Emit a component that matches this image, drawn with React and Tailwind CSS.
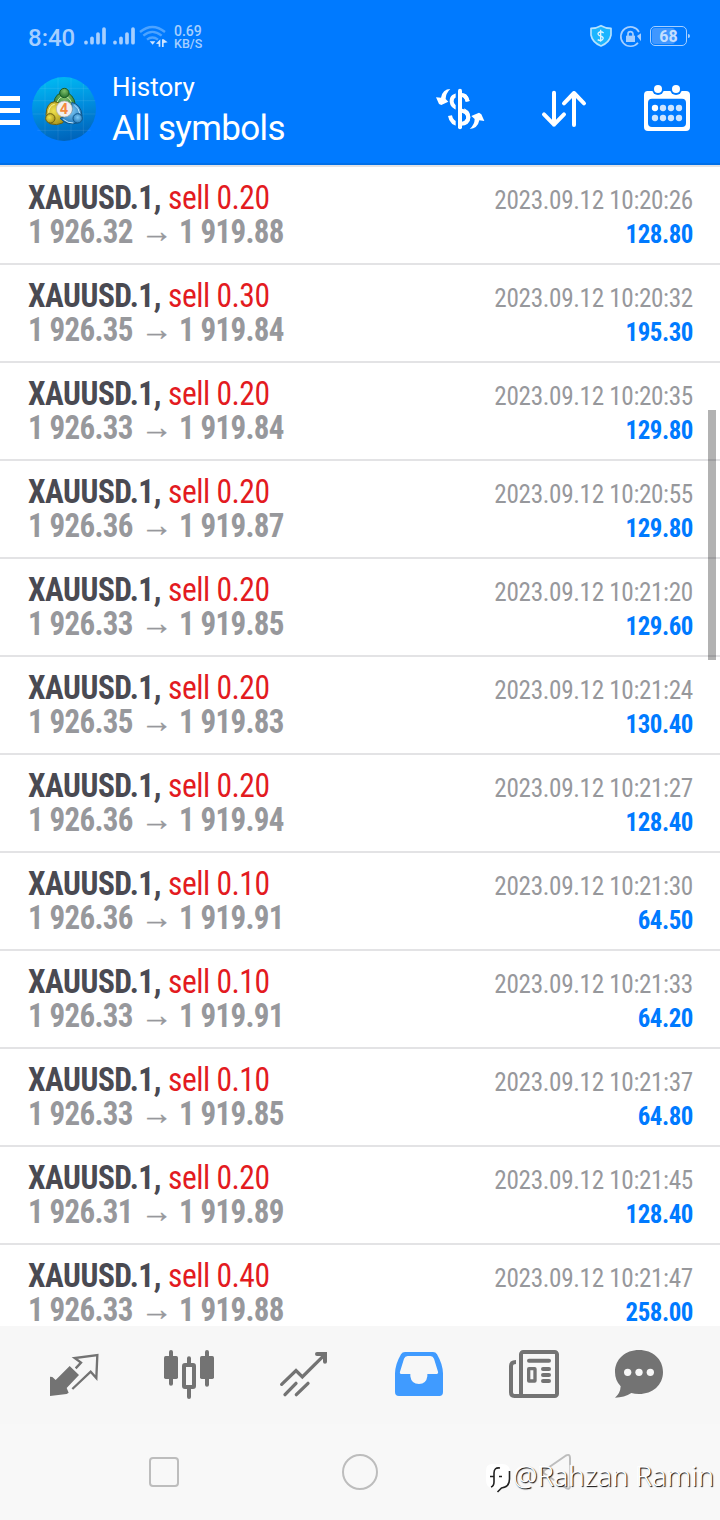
import React from 'react';

const deals = [
  { volume: '0.20', open: '1 926.32', close: '1 919.88', time: '2023.09.12 10:20:26', profit: '128.80' },
  { volume: '0.30', open: '1 926.35', close: '1 919.84', time: '2023.09.12 10:20:32', profit: '195.30' },
  { volume: '0.20', open: '1 926.33', close: '1 919.84', time: '2023.09.12 10:20:35', profit: '129.80' },
  { volume: '0.20', open: '1 926.36', close: '1 919.87', time: '2023.09.12 10:20:55', profit: '129.80' },
  { volume: '0.20', open: '1 926.33', close: '1 919.85', time: '2023.09.12 10:21:20', profit: '129.60' },
  { volume: '0.20', open: '1 926.35', close: '1 919.83', time: '2023.09.12 10:21:24', profit: '130.40' },
  { volume: '0.20', open: '1 926.36', close: '1 919.94', time: '2023.09.12 10:21:27', profit: '128.40' },
  { volume: '0.10', open: '1 926.36', close: '1 919.91', time: '2023.09.12 10:21:30', profit: '64.50' },
  { volume: '0.10', open: '1 926.33', close: '1 919.91', time: '2023.09.12 10:21:33', profit: '64.20' },
  { volume: '0.10', open: '1 926.33', close: '1 919.85', time: '2023.09.12 10:21:37', profit: '64.80' },
  { volume: '0.20', open: '1 926.31', close: '1 919.89', time: '2023.09.12 10:21:45', profit: '128.40' },
  { volume: '0.40', open: '1 926.33', close: '1 919.88', time: '2023.09.12 10:21:47', profit: '258.00' }
];

const SignalIcon = () => (
  <svg viewBox="246 78 168 66" className="w-14 h-[22px] shrink-0" stroke="#a6cfff" strokeWidth="11" strokeLinecap="round">
    <path d="M258 130v1M276 118v13M294 105v26M312 90v41M345 130v1M363 118v13M381 105v26M399 90v41" />
  </svg>
);

const WifiIcon = () => (
  <svg viewBox="420 72 96 72" className="w-8 h-6 shrink-0" fill="none">
    <path d="M426 96Q463 66 501 96" stroke="#4da3ff" strokeWidth="7" />
    <path d="M436 107Q463 84 491 107" stroke="#4da3ff" strokeWidth="7" />
    <path d="M447 119Q463 106 480 119" stroke="#4da3ff" strokeWidth="7" />
    <path d="M455 124h17l-8 10zM474 131l13-13v22h-5v-8zM492 118h5l12 9-12 2v12h-5z" fill="#cfe5ff" />
  </svg>
);

const ShieldIcon = () => (
  <svg viewBox="507 42 72 72" className="w-6 h-6 shrink-0">
    <path d="M543 47q14 8 30 8v20q-4 22-30 33q-26-11-30-33V55q16 0 30-8z" fill="#1cb5ff" stroke="#b5e2ff" strokeWidth="5" strokeLinejoin="round" />
    <path d="M551 69q-8-6-14-2t0 9l8 3q8 5 2 10t-14 0M542 59v36" fill="none" stroke="#dff3ff" strokeWidth="4" />
  </svg>
);

const LockIcon = () => (
  <svg viewBox="597 42 72 72" className="w-6 h-6 shrink-0" fill="none">
    <path d="M657 66A29 29 0 1 0 654 98" stroke="#a6cfff" strokeWidth="5" />
    <path d="M651 78l12-8v24z" fill="#a6cfff" />
    <path d="M618 77h27v19h-27z" fill="#a6cfff" />
    <path d="M624 78v-6q0-7 7-7t8 7v6" stroke="#a6cfff" strokeWidth="5" />
  </svg>
);

const BatteryIcon = () => (
  <div className="ml-px flex items-center">
    <div className="w-[37px] h-5 rounded-[5px] border border-[#a6cfff] p-px">
      <div className="w-[23px] h-4 rounded-[3px] bg-[#4097ff]">
        <div className="w-[33px] pt-px text-center text-[16px]/4 font-bold text-[#c4dfff]">68</div>
      </div>
    </div>
    <div className="ml-px w-[2px] h-1 rounded-r bg-[#a6cfff]"></div>
  </div>
);

const AppLogo = () => (
  <svg viewBox="96 231 192 192" className="w-16 h-16 shrink-0">
    <defs>
      <linearGradient id="sky" x1="0.4" y1="0" x2="0.6" y2="1">
        <stop offset="0" stopColor="#00b9f2" />
        <stop offset="0.5" stopColor="#008bdc" />
        <stop offset="1" stopColor="#0062b8" />
      </linearGradient>
      <radialGradient id="green" cx="0.5" cy="0.3" r="0.7">
        <stop offset="0" stopColor="#7fc06a" />
        <stop offset="1" stopColor="#23702c" />
      </radialGradient>
      <radialGradient id="yellow" cx="0.4" cy="0.4" r="0.7">
        <stop offset="0" stopColor="#efe04c" />
        <stop offset="1" stopColor="#a18d18" />
      </radialGradient>
      <radialGradient id="blue" cx="0.5" cy="0.4" r="0.7">
        <stop offset="0" stopColor="#7cc8f5" />
        <stop offset="1" stopColor="#156bb0" />
      </radialGradient>
    </defs>
    <circle cx="192" cy="327" r="96" fill="url(#sky)" />
    <path d="M135 250v154M174 233v188M213 234v187M250 252v150M118 265h148M98 302h188M98 342h188M112 391h160" stroke="#fff" strokeOpacity="0.13" strokeWidth="2" />
    <path d="M162 326q-4-37 19-47h24q24 15 21 51l-18-7q-15-18-31 1z" fill="url(#green)" stroke="#1d5f28" strokeWidth="3" />
    <path d="M170 318q1-26 22-30q21 3 25 30" fill="none" stroke="#c9e8a8" strokeWidth="3" />
    <path d="M164 305q-25 2-26 39l11 27q21 7 39-2l8-16q-22-6-18-24l7-14q-11-9-21-10z" fill="url(#yellow)" stroke="#6b6013" strokeWidth="3" />
    <path d="M146 338q1-22 18-25" fill="none" stroke="#fff6a0" strokeWidth="3" />
    <path d="M215 307q28 6 31 39l-9 21q-34 13-57-12l13-5q22-4 23-20z" fill="url(#blue)" stroke="#0f5589" strokeWidth="3" />
    <path d="M223 315q14 8 16 25M190 358q14 12 30 11" fill="none" stroke="#c2e8ff" strokeWidth="3" />
    <circle cx="193" cy="279" r="14" fill="url(#green)" stroke="#1a5a26" strokeWidth="3" />
    <circle cx="151" cy="355" r="14" fill="url(#yellow)" stroke="#6b6013" strokeWidth="3" />
    <circle cx="233" cy="355" r="14" fill="url(#blue)" stroke="#0f5589" strokeWidth="3" />
    <circle cx="193" cy="327" r="24" fill="#f1efee" stroke="#aaa" strokeWidth="2" />
    <text x="192" y="342" textAnchor="middle" fontSize="44" fontWeight="700" fill="#f58a3c">4</text>
  </svg>
);

const CurrencyIcon = () => (
  <svg viewBox="42 225 156 144" className="w-[52px] h-12" fill="none">
    <path d="M143 274q-4-20-23-20q-26 1-25 21q1 16 24 22q26 6 26 24q-1 20-25 21q-26 0-30-25" stroke="#fff" strokeWidth="12" />
    <path d="M120 236v122" stroke="#007aff" strokeWidth="26" />
    <path d="M120 301q25 4 25 22q-1 18-25 19M120 254q19 0 23 20" stroke="#fff" strokeWidth="12" />
    <path d="M120 242v110" stroke="#fff" strokeWidth="12" strokeLinecap="round" />
    <path d="M91 237q-23 0-28 26l-15-1l9 20l7 3l21-10l-8-8q0-17 14-30z" fill="#fff" />
    <path d="M149 357q24-1 29-26l15 2l-9-20l-7-5l-23 10l10 9q0 17-15 30z" fill="#fff" />
  </svg>
);

const SortIcon = () => (
  <svg viewBox="360 231 144 132" className="w-12 h-11" fill="none" stroke="#fff" strokeWidth="12" strokeLinecap="round" strokeLinejoin="round">
    <path d="M402 248v96M372 313l30 31l30-31M462 345v-96M432 280l30-31l30 31" />
  </svg>
);

const CalendarIcon = () => (
  <svg viewBox="666 219 150 150" className="mb-[2px] w-[50px] h-[50px]">
    <path d="M683 243h115q12 0 12 12v96q0 12-12 12H684q-12 0-12-12v-96q0-12 11-12z" fill="#fff" />
    <path d="M696 266h90q12 0 12 12v61q0 12-12 12h-90q-12 0-12-12v-61q0-12 12-12z" fill="#007aff" />
    <circle cx="714" cy="237" r="18" fill="#007aff" />
    <circle cx="768" cy="237" r="18" fill="#007aff" />
    <circle cx="714" cy="237" r="12" fill="#fff" />
    <circle cx="768" cy="237" r="12" fill="#fff" />
    <circle cx="705" cy="294" r="9.5" fill="#fff" />
    <g fill="#cce4ff">
      <circle cx="729" cy="294" r="9.5" />
      <circle cx="753" cy="294" r="9.5" />
      <circle cx="777" cy="294" r="9.5" />
      <circle cx="705" cy="324" r="9.5" />
      <circle cx="729" cy="324" r="9.5" />
      <circle cx="753" cy="324" r="9.5" />
      <circle cx="777" cy="324" r="9.5" />
    </g>
  </svg>
);

const QuotesIcon = () => (
  <svg viewBox="144 144 156 156" className="w-[52px] h-[52px]" fill="none">
    <path d="M209 198l28 27l-37 39l6 14l-6 4l-50 6v-58l7 1l10 9z" fill="#737373" />
    <path d="M227 205l16-17l-19-14l68-9l-3 69l-17-19l-55 52" stroke="#737373" strokeWidth="7" />
  </svg>
);

const ChartIcon = () => (
  <svg viewBox="486 144 162 156" className="w-[54px] h-[52px]" fill="none" stroke="#737373">
    <path d="M513 156v95M621 156v98M567 175v18M567 264v27" strokeWidth="12" strokeLinecap="round" />
    <rect x="492" y="168" width="42" height="69" rx="5" fill="#737373" stroke="none" />
    <rect x="600" y="168" width="42" height="69" rx="5" fill="#737373" stroke="none" />
    <rect x="552" y="195" width="30" height="66" rx="3" strokeWidth="12" />
  </svg>
);

const TradeIcon = () => (
  <svg viewBox="834 144 156 156" className="w-[52px] h-[52px]" fill="none" stroke="#737373" strokeWidth="10" strokeLinecap="round">
    <path d="M845 253l43-41l19 19l68-68M855 284l33-34M889 284l35-34" />
    <path d="M951 162h24v23" strokeWidth="12" />
  </svg>
);

const HistoryIcon = () => (
  <svg viewBox="96 144 162 156" className="w-[54px] h-[52px]">
    <path fillRule="evenodd" d="M135 156h84q8 0 12 7q17 29 18 57v56q0 12-11 12H117q-12 0-12-12v-56q1-28 18-57q4-7 12-7zM143 168q-8 0-11 8l-12 39q-2 7 6 7h25v7q3 23 26 23q22 0 25-23v-7h25q9 0 7-7l-12-39q-3-8-11-8z" fill="#409bff" />
  </svg>
);

const NewsIcon = () => (
  <svg viewBox="444 144 162 156" className="w-[54px] h-[52px]" fill="none" stroke="#737373" strokeWidth="12">
    <rect x="483" y="156" width="108" height="132" rx="7" />
    <path d="M468 186q-15 0-15 12v79q0 11 10 11h25" />
    <path d="M507 182h60M549 207h18M549 225h18M549 243h18" strokeLinecap="round" />
    <rect x="506" y="206" width="19" height="37" rx="1" strokeWidth="10" />
  </svg>
);

const ChatIcon = () => (
  <svg viewBox="759 144 156 156" className="w-[52px] h-[52px]">
    <path d="M837 150c41 0 72 27 72 66s-31 66-72 66q-13 0-23-3q-21 14-49 14q16-13 17-34q-17-18-17-43c0-39 31-66 72-66z" fill="#737373" />
    <circle cx="803" cy="217" r="11" fill="#f7f7f7" />
    <circle cx="837" cy="217" r="11" fill="#f7f7f7" />
    <circle cx="871" cy="217" r="11" fill="#f7f7f7" />
  </svg>
);

const DealRow = ({ deal }) => (
  <div className="flex h-[98px] shrink-0 justify-between border-b-2 border-[#e3e3e5] pr-[27px] pl-7 font-['Roboto_Condensed','Roboto',sans-serif] font-stretch-condensed whitespace-pre">
    <div className="pt-[14px] text-[32.5px]/[34px] font-bold">
      <div className="flex">
        <div className="w-[139.5px] origin-left scale-x-[0.965] tracking-[-0.5px] text-[#4a4a52]">XAUUSD.1,</div>
        <div className="origin-left scale-x-[0.97] font-normal tracking-[-0.5px] text-[#e31b1f]">sell {deal.volume}</div>
      </div>
      <div className="flex text-[#97989c]">
        <div className="w-[106px] origin-left scale-x-[0.953] tracking-[-0.7px]">{deal.open}</div>
        <div className="w-[45px] text-center font-['Noto_Sans',sans-serif] text-[32px]/[29px] font-normal [-webkit-text-stroke:0.4px_#97989c]">→</div>
        <div className="origin-left scale-x-[0.953] tracking-[-0.7px]">{deal.close}</div>
      </div>
    </div>
    <div className="pt-4 text-right text-[26px]/[34px]">
      <div className="origin-right scale-x-[0.969] tracking-[-0.35px] text-[#97989c]">{deal.time}</div>
      <div className="origin-right scale-x-[0.957] font-bold tracking-[-0.5px] text-[#007aff]">{deal.profit}</div>
    </div>
  </div>
);

const App = () => {
  return (
    <div className="relative flex h-[1520px] w-[720px] flex-col overflow-hidden bg-white font-['Roboto',sans-serif]">
      <header className="h-[167px] shrink-0 border-b-2 border-[#e3e3e5] bg-[#007aff]">
        <div className="flex h-[165px] flex-col border-b-2 border-[#006fe8]">
          {/* Status bar */}
          <div className="flex h-[72px] items-center justify-between pl-7 pr-[30px]">
            <div className="flex items-center text-[#a6cfff]">
              <span className="w-[54px] pt-[3px] text-2xl font-medium">8:40</span>
              <SignalIcon />
              <WifiIcon />
              <div className="ml-1 pt-[3px] font-medium">
                <div className="text-sm/3">0.69</div>
                <div className="text-[12.5px]/[13px]">KB/S</div>
              </div>
            </div>
            <div className="flex items-center gap-[6px]">
              <ShieldIcon />
              <LockIcon />
              <BatteryIcon />
            </div>
          </div>

          {/* Toolbar */}
          <div className="flex h-[74px] items-center pr-7 text-white">
            <div className="flex w-5 flex-col gap-[7px] pt-[3px]">
              <div className="h-[5px] bg-white"></div>
              <div className="h-[5px] bg-white"></div>
              <div className="h-[5px] bg-white"></div>
            </div>
            <div className="ml-3">
              <AppLogo />
            </div>
            <div className="ml-4 flex-1 pt-[7px]">
              <div className="text-[26px]/[32px]">History</div>
              <div className="text-[35px]/[51px] tracking-[-0.65px]">All symbols</div>
            </div>
            <div className="flex items-center gap-[54px]">
              <CurrencyIcon />
              <SortIcon />
              <CalendarIcon />
            </div>
          </div>
        </div>
      </header>

      <main className="flex min-h-0 flex-1 flex-col overflow-hidden">
        {deals.map((deal) => (
          <DealRow key={deal.time} deal={deal} />
        ))}
      </main>
      <div className="absolute top-[410px] right-1 h-[250px] w-2 bg-black/30"></div>

      <nav className="flex h-[98px] shrink-0 items-start gap-[62px] bg-[#f7f7f7] pt-[22px] pl-12">
        <QuotesIcon />
        <ChartIcon />
        <TradeIcon />
        <HistoryIcon />
        <NewsIcon />
        <div className="-ml-[11px]">
          <ChatIcon />
        </div>
      </nav>

      {/* System navigation */}
      <div className="flex h-24 shrink-0 items-center gap-[163px] bg-[#f8f8f8] pl-[149px]">
        <div className="size-[30px] rounded-[4px] border-2 border-[#bdbdbd]"></div>
        <div className="size-9 rounded-full border-2 border-[#bdbdbd]"></div>
        <svg viewBox="0 0 30 38" className="ml-px h-[38px] w-[30px]" fill="none" stroke="#bdbdbd" strokeWidth="2" strokeLinejoin="round">
          <path d="M3 17L24 2.500Q28 0.500 28 5v28q0 4-4 2L3 21q-3-2 0-4z" />
        </svg>
      </div>

      <div className="absolute right-[6px] bottom-[25px] flex items-center text-white">
        <svg viewBox="0 0 26 30" className="mt-[3px] h-[30px] w-[26px]" fill="none">
          <path d="M7 1h10q8 0 8 8v6q0 9-8 9l-4 4-2-3H7q-6-1-6-8V8q0-7 6-7z" fill="#fff" />
          <path d="M24.500 8v8q0 8-8 9l-4 4M15 5q-6-1-6 5v9q0 4-3 5M5 13.500h4M14 13.500h3" stroke="#222" strokeWidth="1.600" />
        </svg>
        <span className="ml-[2px] font-['Noto_Sans',sans-serif] text-[27.4px]/[38px] font-light [text-shadow:1px_1px_1px_#000,-1px_0_1px_#fff]">@Rahzan Ramin</span>
      </div>
    </div>
  );
};

export default App;
